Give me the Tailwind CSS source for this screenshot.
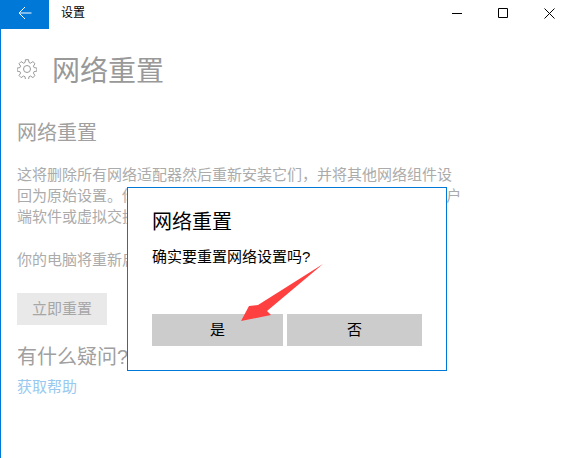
<!DOCTYPE html>
<html lang="zh-CN">
  <head>
    <meta charset="UTF-8" />
    <title>设置</title>
    <script src="https://cdn.jsdelivr.net/npm/@tailwindcss/browser@4"></script>
  </head>
  <body class="bg-white overflow-hidden font-['Liberation_Sans','Noto_Sans_CJK_SC',sans-serif]">
    <div class="relative w-[571px] h-[458px] border-l border-[#0078d7] overflow-hidden">
      <!-- title bar -->
      <div class="flex items-center h-[29px]">
        <div class="flex items-center justify-center w-[48px] h-[29px] pb-[4px] bg-[#0078d7]">
          <svg width="14" height="14" viewBox="0 0 14 14" fill="none" stroke="#fff" stroke-width="1">
            <path d="M1 7h12.500M7 1 1 7l6 6" />
          </svg>
        </div>
        <span class="ml-[12px] pb-[3px] text-[12px] text-black">设置</span>
        <div class="flex ml-auto mb-[3px] mr-[-1px]">
          <div class="flex items-center justify-center w-[46px] h-[26px]">
            <svg width="10" height="10" viewBox="0 0 10 10" fill="none" stroke="#000" stroke-width="1"><path d="M0 5.500h10" /></svg>
          </div>
          <div class="flex items-center justify-center w-[46px] h-[26px]">
            <svg width="10" height="10" viewBox="0 0 10 10" fill="none" stroke="#000" stroke-width="1"><path d="M.5.500h9v9h-9z" /></svg>
          </div>
          <div class="flex items-center justify-center w-[46px] h-[26px]">
            <svg width="11" height="11" viewBox="0 0 11 11" fill="none" stroke="#000" stroke-width="1"><path d="M.5.500l10 10M10.500.500l-10 10" /></svg>
          </div>
        </div>
      </div>

      <!-- page content, dimmed behind the dialog -->
      <div class="pl-[16px] w-[480px]">
        <div class="flex items-center mt-[21px] h-[40px]">
          <svg class="mb-[2px]" width="20" height="20" viewBox="0 0 20 20" fill="none" stroke="#9a9a9a" stroke-width="1">
            <circle cx="10" cy="10" r="3.500" />
            <path d="M8.500.700h3l.5 2.800 1.500.700 2.400-1.600 2.100 2.100-1.600 2.400.7 1.500 2.800.5v3l-2.800.5-.7 1.500 1.600 2.400-2.100 2.100-2.400-1.600-1.500.7-.5 2.800h-3l-.5-2.800-1.500-.7-2.400 1.600-2.100-2.100 1.600-2.400-.7-1.500-2.800-.5v-3l2.800-.5.7-1.500-1.600-2.400 2.100-2.100 2.400 1.600 1.500-.7z" />
          </svg>
          <h1 class="ml-[15px] mt-[3px] text-[28px] leading-[40px] text-[#999999]">网络重置</h1>
        </div>
        <h2 class="mt-[29px] text-[20px] leading-[28px] text-[#a0a0a0]">网络重置</h2>
        <p class="mt-[17px] text-[15px] leading-[21px] text-[#ababab] whitespace-nowrap">
          这将删除所有网络适配器然后重新安装它们，并将其他网络组件设<br />
          回为原始设置。你可能需要重新安装其他网络软件，例如 VPN 客户<br />
          端软件或虚拟交换机。
        </p>
        <p class="mt-[22px] text-[15px] leading-[21px] text-[#ababab]">你的电脑将重新启动。</p>
        <div class="flex items-center justify-center mt-[23px] w-[90px] h-[32px] bg-[#e9e9e9] text-[15px] text-[#a6a6a6]">立即重置</div>
        <h2 class="mt-[18px] text-[20px] leading-[28px] text-[#a0a0a0]">有什么疑问?</h2>
        <a class="block mt-[5px] text-[15px] leading-[21px] text-[#99c9ef]">获取帮助</a>
      </div>

      <!-- dialog -->
      <div class="absolute left-[126px] top-[187px] w-[320px] h-[184px] bg-white border border-[#0078d7] px-[24px]">
        <h3 class="mt-[20px] text-[20px] leading-[28px] text-black">网络重置</h3>
        <p class="mt-[10px] text-[15px] leading-[22px] text-black">确实要重置网络设置吗?</p>
        <div class="flex gap-[4px] mt-[46px]">
          <button class="w-[131px] h-[32px] bg-[#cccccc] text-[15px] text-black">是</button>
          <button class="w-[135px] h-[32px] bg-[#cccccc] text-[15px] text-black">否</button>
        </div>
      </div>

      <!-- red annotation arrow -->
      <svg class="absolute left-[-1px] top-0" width="571" height="458" viewBox="0 0 571 458">
        <path d="M323 264 258 305 249 306 241 321 271 315 267 311z" fill="#ff4040" />
      </svg>
    </div>
  </body>
</html>
